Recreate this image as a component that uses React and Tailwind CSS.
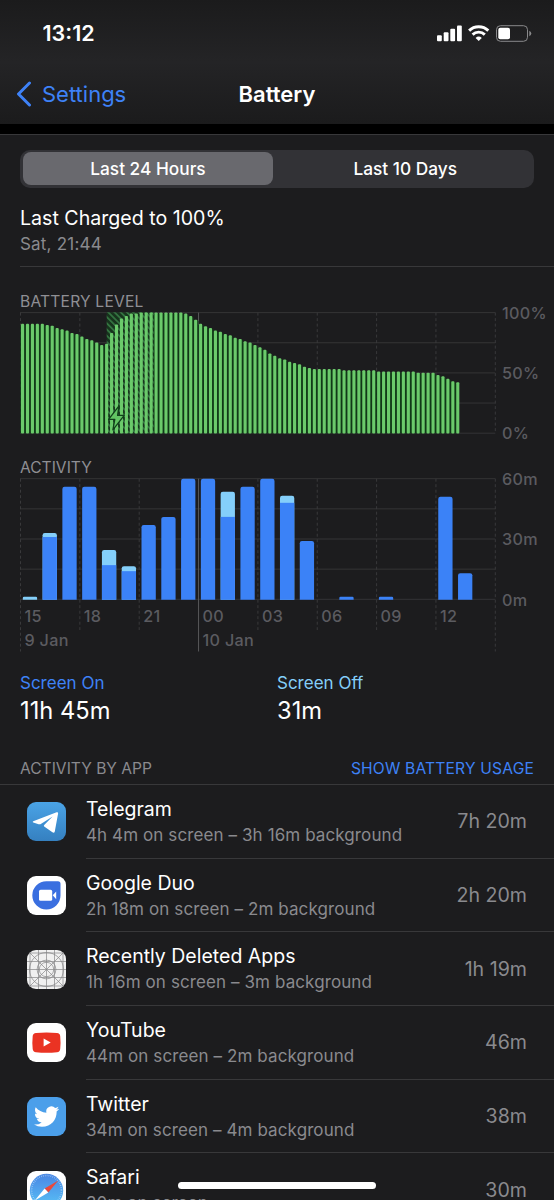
import React from 'react';

// Battery level samples, one bar every 15 minutes (percent)
const LEVELS = [
  90.5, 90.5, 90.5, 90.5, 90.5, 89.5, 89, 87, 86, 85, 83, 82, 80, 78, 77, 75, 73, 74, 83, 90, 95, 97, 99, 99,
  100, 100, 100, 100, 100, 100, 100, 100, 100, 99, 97, 94, 90.5, 88.5, 87, 85, 84, 82, 81, 79, 78, 76, 75, 73,
  71, 69, 66, 64, 62, 61, 59, 58, 57, 55, 54, 53, 53, 53, 53, 53, 53, 52, 52, 52, 52, 52, 52, 52,
  51, 51, 51, 51, 51, 51, 51, 51, 50, 50, 50, 50, 48, 47, 45, 43, 42,
];

// Minutes per hour, starting at 15:00: [screen on, screen off]
const ACTIVITY = [
  [0, 1], [31, 2], [56, 0], [56, 0], [17, 7.5], [14, 2.5], [37, 0], [41, 0], [60, 0], [60, 0], [41, 12.5], [56, 0],
  [60, 0], [48, 3.5], [29, 0], [0, 0], [1, 0], [0, 0], [1, 0], [0, 0], [0, 0], [51, 0], [13, 0], [0, 0],
];

const HOURS = ['15', '18', '21', '00', '03', '06', '09', '12'];

const APPS = [
  { name: 'Telegram', detail: '4h 4m on screen – 3h 16m background', time: '7h 20m', icon: TelegramIcon },
  { name: 'Google Duo', detail: '2h 18m on screen – 2m background', time: '2h 20m', icon: DuoIcon },
  { name: 'Recently Deleted Apps', detail: '1h 16m on screen – 3m background', time: '1h 19m', icon: DeletedIcon },
  { name: 'YouTube', detail: '44m on screen – 2m background', time: '46m', icon: YouTubeIcon },
  { name: 'Twitter', detail: '34m on screen – 4m background', time: '38m', icon: TwitterIcon },
  { name: 'Safari', detail: '30m on screen', time: '30m', icon: SafariIcon },
];

const X0 = 20.5;
const SECTION = 59.35;
const X1 = X0 + SECTION * 8;

function TelegramIcon() {
  return (
    <svg viewBox="0 0 39 39" className="size-full">
      <defs>
        <linearGradient id="tg" x1="0" y1="0" x2="0" y2="1">
          <stop offset="0" stopColor="#4aa3e6" />
          <stop offset="1" stopColor="#3580c0" />
        </linearGradient>
      </defs>
      <rect width="39" height="39" fill="url(#tg)" />
      <path d="M6.2 19.2 29.6 10.3Q31.3 9.9 31.1 11.6L27.8 29.4Q27.3 31.5 25.4 30.3L17.2 24.6Q16.4 23.8 17.2 22.9L25.6 14.4 13.4 22.2Q12.5 22.5 11.6 22.2L6.3 20.5Q5 19.9 6.2 19.2Z" fill="#fff" />
    </svg>
  );
}

function DuoIcon() {
  return (
    <svg viewBox="0 0 39 39" className="size-full">
      <rect width="39" height="39" fill="#fff" />
      <path d="M19.5 5.3H31Q33.5 5.3 33.5 7.8V19.5A14.1 14.1 0 1 1 19.5 5.3Z" fill="#3a6fe0" />
      <rect x="12" y="13.8" width="13.2" height="11" rx="1.6" fill="#fff" />
      <path d="M25.7 19.3 29.2 15.5V23.3Z" fill="#fff" />
    </svg>
  );
}

function DeletedIcon() {
  return (
    <svg viewBox="0 0 39 39" className="size-full">
      <rect width="39" height="39" fill="#f0f0f0" />
      <g fill="none" stroke="#858587" strokeWidth="0.7">
        <path d="M0 0 39 39M39 0 0 39M19.5 0V39M0 19.5H39M3 0V39M11.5 0V39M27.5 0V39M36 0V39M0 3H39M0 11.5H39M0 27.5H39M0 36H39" />
        <circle cx="19.5" cy="19.5" r="17" />
        <circle cx="19.5" cy="19.5" r="9.4" />
        <circle cx="19.5" cy="19.5" r="7.2" />
      </g>
    </svg>
  );
}

function YouTubeIcon() {
  return (
    <svg viewBox="0 0 39 39" className="size-full">
      <rect width="39" height="39" fill="#fff" />
      <path d="M9 10Q19.5 8.9 30 10Q33 10.3 33.2 13Q33.9 19.5 33.2 26Q33 29 30 29.3Q19.5 30.3 9 29.3Q6 29 5.7 26Q5 19.5 5.7 13Q6 10.3 9 10Z" fill="#ea3323" />
      <path d="M16.6 15.6 23.7 19.6 16.6 23.6Z" fill="#fff" />
    </svg>
  );
}

function TwitterIcon() {
  return (
    <svg viewBox="0 0 39 39" className="size-full">
      <rect width="39" height="39" fill="#4b9fea" />
      <path
        transform="translate(7 7) scale(1.05)"
        d="M23.953 4.57a10 10 0 01-2.825.775 4.958 4.958 0 002.163-2.723c-.951.555-2.005.959-3.127 1.184a4.92 4.92 0 00-8.384 4.482C7.69 8.095 4.067 6.13 1.64 3.162a4.822 4.822 0 00-.666 2.475c0 1.71.87 3.213 2.188 4.096a4.904 4.904 0 01-2.228-.616v.06a4.923 4.923 0 003.946 4.827 4.996 4.996 0 01-2.212.085 4.936 4.936 0 004.604 3.417 9.867 9.867 0 01-6.102 2.105c-.39 0-.779-.023-1.17-.067a13.995 13.995 0 007.557 2.209c9.053 0 13.998-7.496 13.998-13.985 0-.21 0-.42-.015-.63A9.935 9.935 0 0024 4.59z"
        fill="#fff"
      />
    </svg>
  );
}

function SafariIcon() {
  return (
    <svg viewBox="0 0 39 39" className="size-full">
      <defs>
        <linearGradient id="sf" x1="0" y1="0" x2="0" y2="1">
          <stop offset="0" stopColor="#4a86e4" />
          <stop offset="1" stopColor="#58c2f6" />
        </linearGradient>
      </defs>
      <rect width="39" height="39" fill="#fff" />
      <circle cx="19.5" cy="19.5" r="16.7" fill="url(#sf)" />
      <circle cx="19.5" cy="19.5" r="15" fill="none" stroke="#b9d9f8" strokeWidth="1.6" strokeDasharray="0.5 1.46" />
      <path d="M31.3 9.4 17.6 17.4 21.3 21.5Z" fill="#e9493c" />
      <path d="M7.7 29.6 17.6 17.4 21.3 21.5Z" fill="#fff" />
    </svg>
  );
}

function StatusIcons() {
  return (
    <svg viewBox="0 0 96 18" className="h-[18px] w-[96px]">
      <g fill="#fff">
        <rect x="0" y="10.2" width="4.8" height="6" rx="1" />
        <rect x="6.7" y="7.2" width="4.8" height="9" rx="1" />
        <rect x="13.3" y="3.8" width="4.8" height="12.4" rx="1" />
        <rect x="20" y="0.5" width="4.8" height="15.7" rx="1" />
        <path d="M41.7 16.1 38.6 12.9A4.6 4.6 0 0 1 44.8 12.9Z" />
      </g>
      <g fill="none" stroke="#fff" strokeWidth="2.9">
        <path d="M32.1 5.6A13.8 13.8 0 0 1 51.3 5.6" />
        <path d="M35.6 9.6A8.8 8.8 0 0 1 47.8 9.6" />
      </g>
      <rect x="59.5" y="0.7" width="31" height="15.6" rx="4" fill="none" stroke="#89898b" strokeWidth="1" />
      <rect x="61.3" y="2.7" width="11.7" height="11.6" rx="2" fill="#fff" />
      <path d="M92.3 5.8Q94.3 6.7 94.3 8.5T92.3 11.2Z" fill="#89898b" />
    </svg>
  );
}

// Horizontal lines every quarter and the baseline
function HorizontalGrid({ top, height }) {
  return [0, 1, 2, 3, 4].map((i) => (
    <line key={i} x1={X0 - 0.5} x2={X1} y1={top + (height * i) / 4} y2={top + (height * i) / 4} stroke="#343436" strokeWidth="1" />
  ));
}

function BatteryChart() {
  const top = 1.6;
  const height = 120.6;
  const bottom = top + height;
  const step = SECTION / 12;
  const y = (level) => bottom - (height * level) / 100;

  return (
    <svg viewBox="0 0 554 124" className="block h-[124px] w-full overflow-visible">
      <defs>
        <pattern id="hatch" width="4.4" height="4.4" patternUnits="userSpaceOnUse" patternTransform="rotate(-45)">
          <rect width="4.4" height="4.4" fill="#17341d" />
          <rect width="1.7" height="4.4" fill="#347541" />
        </pattern>
      </defs>
      <HorizontalGrid top={top} height={height} />
      {HOURS.concat('').map((h, i) => (
        <line key={i} x1={X0 + SECTION * i} x2={X0 + SECTION * i} y1={top} y2={bottom} stroke={h === '00' ? '#58585a' : '#39393b'} strokeDasharray={h === '00' ? undefined : '3 2.5'} />
      ))}
      {LEVELS.map((level, i) => (
        <rect key={i} x={X0 - 0.3 + i * step} y={y(level) + 1} width={i === LEVELS.length - 1 ? 3 : step + 0.3} height={bottom - y(level) - 1} fill="#113a18" />
      ))}
      <rect x="106.7" y={top - 0.3} width="47" height={height + 0.3} fill="url(#hatch)" />
      {LEVELS.map((level, i) => (
        <rect key={i} x={X0 + 0.5 + i * step} y={y(level) - 0.2} width="3.1" height={bottom - y(level) + 0.4} rx="0.9" fill="#6bca6b" />
      ))}
      <path d="M119 94.8 108.6 108.4H114.8L112.9 118.8 124.2 104.4H117.6Z" fill="#62c463" stroke="#10401a" strokeWidth="1.3" strokeLinejoin="round" />
      <g className="fill-[#5b5b60] text-[16.2px] font-medium tracking-[0.3px]">
        <text x="502" y="8">100%</text>
        <text x="502" y="68">50%</text>
        <text x="502" y="128.3">0%</text>
      </g>
    </svg>
  );
}

function ActivityChart() {
  const top = 1.7;
  const height = 120.6;
  const bottom = top + height;
  const step = SECTION / 3;
  const scale = height / 60;

  return (
    <svg viewBox="0 0 554 176" className="block h-[176px] w-full overflow-visible">
      <HorizontalGrid top={top} height={height} />
      {HOURS.concat('').map((h, i) => {
        const end = h === '00' || i === 0 || i === 8 ? 174.5 : 153;
        return (
          <line key={i} x1={X0 + SECTION * i} x2={X0 + SECTION * i} y1={top} y2={end} stroke={h === '00' ? '#58585a' : '#39393b'} strokeDasharray={h === '00' ? undefined : '3 2.5'} />
        );
      })}
      {ACTIVITY.map(([on, off], i) => {
        const total = on + off;
        if (!total) return null;
        const x = X0 + 2.3 + i * step;
        const h = Math.max(total * scale, 2.5);
        const r = Math.min(2.2, h / 2);
        return (
          <g key={i}>
            <path
              d={`M${x} ${bottom + 0.5}V${bottom - h + r}q0 ${-r} ${r} ${-r}h${14.3 - 2 * r}q${r} 0 ${r} ${r}V${bottom + 0.5}Z`}
              fill={off ? '#84cffa' : '#3b82f7'}
            />
            {off > 0 && on > 0 && <rect x={x} y={bottom - on * scale} width="14.3" height={on * scale + 0.5} fill="#3b82f7" />}
          </g>
        );
      })}
      <g className="fill-[#5b5b60] text-[16.2px] font-medium tracking-[0.3px]">
        <text x="502" y="8">60m</text>
        <text x="502" y="68">30m</text>
        <text x="502" y="128.5">0m</text>
        {HOURS.map((h, i) => (
          <text key={h} x={X0 + 4 + SECTION * i} y="145">{h}</text>
        ))}
        <text x="24.5" y="169.3">9 Jan</text>
        <text x="202.5" y="169.3">10 Jan</text>
      </g>
    </svg>
  );
}

function AppRow({ app }) {
  const Icon = app.icon;
  return (
    <div className="flex h-[73.7px] shrink-0 items-center pl-[26.6px]">
      <div className="size-[39px] shrink-0 overflow-hidden rounded-[9px]">
        <Icon />
      </div>
      <div className="ml-[20.4px] flex h-full min-w-0 flex-1 items-center justify-between border-b border-[#38383a] pt-[1.4px] pr-[27px]">
        <div className="whitespace-nowrap">
          <div className="text-[19.5px] leading-[26px] text-white">{app.name}</div>
          <div className="text-[17px] leading-[26px] tracking-[0.1px] text-[#8a8a8e]">{app.detail}</div>
        </div>
        <div className="text-[19.6px] text-[#8a8a8e]">{app.time}</div>
      </div>
    </div>
  );
}

export default function App() {
  return (
    <div className="relative flex h-[1200px] w-[554px] flex-col overflow-hidden bg-[#1c1c1e] font-['Inter',sans-serif] text-white">
      {/* Status bar and navigation */}
      <header className="h-[124px] shrink-0 bg-gradient-to-b from-[#1b1b1c] via-[#242426] to-[#1b1b1c]">
        <div className="flex h-[66px] items-center justify-between pt-px pr-[21px] pl-[42.5px]">
          <span className="text-[21.5px] font-semibold">13:12</span>
          <StatusIcons />
        </div>
        <div className="grid h-14 grid-cols-3 items-center">
          <div className="flex items-center pl-[16px] text-[#3e82f7]">
            <svg viewBox="0 0 16 26" className="h-[26px] w-4" fill="none" stroke="currentColor" strokeWidth="3" strokeLinecap="round" strokeLinejoin="round">
              <path d="M13.5 2 2.5 13 13.5 24" />
            </svg>
            <span className="ml-[10px] text-[22px]">Settings</span>
          </div>
          <h1 className="text-center text-[22px] font-semibold">Battery</h1>
        </div>
      </header>
      <div className="h-[10px] shrink-0 bg-black" />

      <main className="flex flex-col border-t border-[#38383a]">
        <div className="mx-5 mt-[14.5px] grid h-[38.5px] shrink-0 grid-cols-[250.5px_1fr] rounded-[10px] bg-[#323236] p-[2.7px] text-[17.3px] font-medium">
          <div className="flex items-center justify-center rounded-[8px] bg-[#69696e]">Last 24 Hours</div>
          <div className="flex items-center justify-center pl-[6px]">Last 10 Days</div>
        </div>

        <div className="mt-[17px] ml-5 border-b border-[#38383a] pb-2">
          <div className="text-[19.6px] leading-[26px]">Last Charged to 100%</div>
          <div className="text-[17px] leading-[27px] tracking-[0.2px] text-[#8a8a8e]">Sat, 21:44</div>
        </div>

        <h2 className="mt-[25px] mb-[-1px] pl-5 text-[15.6px] leading-5 tracking-[0.2px] text-[#8f8f94]">BATTERY LEVEL</h2>
        <BatteryChart />
        <h2 className="mt-[23px] mb-[-1px] pl-5 text-[15.6px] leading-5 text-[#8f8f94]">ACTIVITY</h2>
        <ActivityChart />

        <div className="mt-5 grid grid-cols-2 pl-5">
          <div>
            <div className="text-[17px] leading-5 text-[#3e82f7]">Screen On</div>
            <div className="text-[23.7px] leading-[35px]">11h 45m</div>
          </div>
          <div className="-ml-[10px]">
            <div className="text-[17px] leading-5 text-[#84cffa]">Screen Off</div>
            <div className="text-[23.7px] leading-[35px]">31m</div>
          </div>
        </div>

        <div className="mt-[25px] flex h-8 shrink-0 items-center justify-between border-b border-[#38383a] px-5 text-[15.6px]">
          <span className="text-[#8a8a8e]">ACTIVITY BY APP</span>
          <span className="tracking-[0.18px] text-[#3e82f7]">SHOW BATTERY USAGE</span>
        </div>

        {APPS.map((app) => (
          <AppRow key={app.name} app={app} />
        ))}
      </main>

      {/* Home indicator */}
      <div className="absolute bottom-[11px] left-[178px] h-[7px] w-[198px] rounded-full bg-white" />
    </div>
  );
}
